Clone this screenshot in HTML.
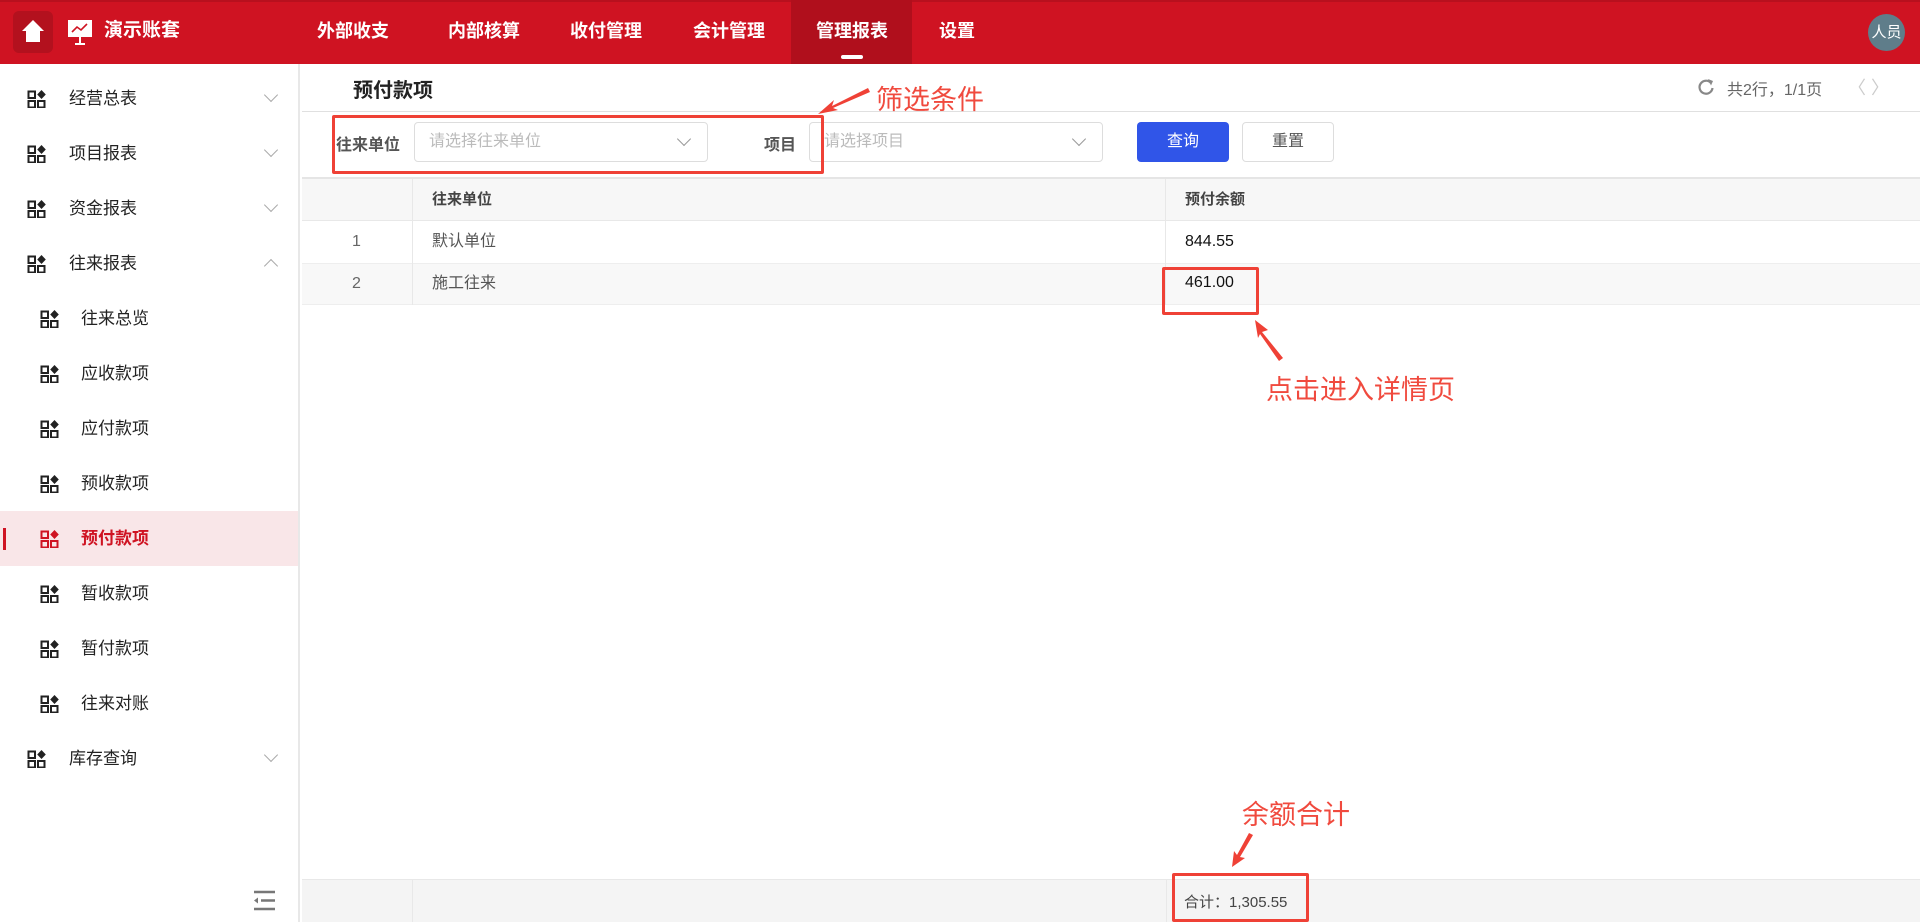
<!DOCTYPE html>
<html><head><meta charset="utf-8"><style>
*{margin:0;padding:0;box-sizing:border-box}
body{width:1920px;height:922px;overflow:hidden;background:#fff;font-family:"Liberation Sans","Noto Sans CJK SC",sans-serif;position:relative;color:#333}
.abs{position:absolute}
.hdr{left:0;top:0;width:1920px;height:64px;background:#cf1322;border-top:2px solid #b8101e}
.nav{top:0;height:64px;line-height:62px;color:#fff;font-weight:bold;font-size:18px;transform:translateX(-50%)}
.side{left:0;top:64px;width:300px;height:858px;border-right:2px solid #e8e8e8}
.mi{left:0;width:298px;height:55px;font-size:17px;color:#222;line-height:55px}
.ic{position:absolute;top:19px;width:19px;height:18px;color:#222}
.chev{position:absolute;left:266px;top:19px;width:10px;height:10px;border-right:1.5px solid #aaa;border-bottom:1.5px solid #aaa;transform:rotate(45deg)}
.chev.up{transform:rotate(225deg);top:25px}
.red{color:#f04a3e;font-size:27px}
.box{border:3px solid #ef4136;border-radius:2px}
.sel{border:1px solid #ddd;border-radius:4px;height:40px;top:122px;font-size:16px;color:#bbb;line-height:38px;padding-left:14px}
.sel:after{content:"";position:absolute;right:18px;top:11px;width:9px;height:9px;border-right:1.3px solid #999;border-bottom:1.3px solid #999;transform:rotate(45deg)}
.cell{font-size:16px;line-height:42px}
</style></head><body>
<div class="abs hdr"></div>
<div class="abs" style="left:13px;top:11px;width:40px;height:42px;background:#b3111e;border-radius:6px"></div>
<svg class="abs" style="left:20px;top:18px" width="26" height="26" viewBox="0 0 26 26"><path d="M13 2 L24 13 L20 13 L20 24 L6 24 L6 13 L2 13Z" fill="#fff"/></svg>
<svg class="abs" style="left:66px;top:18px" width="28" height="28" viewBox="0 0 28 28"><rect x="2" y="2" width="24" height="17" fill="#fff"/><path d="M6 14 L11 9 L15 12 L21 6" stroke="#cf1322" stroke-width="1.6" fill="none"/><path d="M14 19 L14 26 M9 26 L19 26" stroke="#fff" stroke-width="2"/></svg>
<div class="abs" style="left:104px;top:0;line-height:62px;color:#fff;font-weight:bold;font-size:19px">演示账套</div>
<div class="abs" style="left:791px;top:0;width:121px;height:64px;background:#b00f1c"></div>
<div class="abs" style="left:841px;top:55px;width:22px;height:4px;background:#fff;border-radius:2px"></div>
<div class="abs nav" style="left:353px">外部收支</div>
<div class="abs nav" style="left:484px">内部核算</div>
<div class="abs nav" style="left:606px">收付管理</div>
<div class="abs nav" style="left:729px">会计管理</div>
<div class="abs nav" style="left:852px">管理报表</div>
<div class="abs nav" style="left:957px">设置</div>
<div class="abs" style="left:1868px;top:14px;width:37px;height:37px;border-radius:50%;background:#5f7d8a;color:#fff;font-size:15px;line-height:37px;text-align:center">人员</div>

<div class="abs side"></div>
<svg width="0" height="0" style="position:absolute"><defs><g id="gi"><rect x="1.5" y="1.5" width="6.5" height="6.5" fill="none" stroke="currentColor" stroke-width="2"/><rect x="1.5" y="11" width="6.5" height="6.5" fill="none" stroke="currentColor" stroke-width="2"/><rect x="11" y="11" width="6.5" height="6.5" fill="none" stroke="currentColor" stroke-width="2"/><path d="M14.5 0 L18.8 4.5 L14.5 9 L10.2 4.5Z" fill="currentColor"/></g></defs></svg>
<div class="abs mi" style="top:71px"><svg class="ic" style="left:27px"><use href="#gi"/></svg><span class="abs" style="left:69px">经营总表</span><i class="chev"></i></div>
<div class="abs mi" style="top:126px"><svg class="ic" style="left:27px"><use href="#gi"/></svg><span class="abs" style="left:69px">项目报表</span><i class="chev"></i></div>
<div class="abs mi" style="top:181px"><svg class="ic" style="left:27px"><use href="#gi"/></svg><span class="abs" style="left:69px">资金报表</span><i class="chev"></i></div>
<div class="abs mi" style="top:236px"><svg class="ic" style="left:27px"><use href="#gi"/></svg><span class="abs" style="left:69px">往来报表</span><i class="chev up"></i></div>
<div class="abs mi" style="top:291px"><svg class="ic" style="left:40px"><use href="#gi"/></svg><span class="abs" style="left:81px">往来总览</span></div>
<div class="abs mi" style="top:346px"><svg class="ic" style="left:40px"><use href="#gi"/></svg><span class="abs" style="left:81px">应收款项</span></div>
<div class="abs mi" style="top:401px"><svg class="ic" style="left:40px"><use href="#gi"/></svg><span class="abs" style="left:81px">应付款项</span></div>
<div class="abs mi" style="top:456px"><svg class="ic" style="left:40px"><use href="#gi"/></svg><span class="abs" style="left:81px">预收款项</span></div>
<div class="abs mi" style="top:511px;background:#f9e6e8;color:#cf1322;font-weight:bold"><div class="abs" style="left:3px;top:17px;width:3px;height:22px;background:#cf1322"></div><svg class="ic" style="left:40px;color:#cf1322"><use href="#gi"/></svg><span class="abs" style="left:81px">预付款项</span></div>
<div class="abs mi" style="top:566px"><svg class="ic" style="left:40px"><use href="#gi"/></svg><span class="abs" style="left:81px">暂收款项</span></div>
<div class="abs mi" style="top:621px"><svg class="ic" style="left:40px"><use href="#gi"/></svg><span class="abs" style="left:81px">暂付款项</span></div>
<div class="abs mi" style="top:676px"><svg class="ic" style="left:40px"><use href="#gi"/></svg><span class="abs" style="left:81px">往来对账</span></div>
<div class="abs mi" style="top:731px"><svg class="ic" style="left:27px"><use href="#gi"/></svg><span class="abs" style="left:69px">库存查询</span><i class="chev"></i></div>
<svg class="abs" style="left:252px;top:890px" width="24" height="22" viewBox="0 0 24 22"><path d="M2 2H23M9 10.5H23M2 19H23" stroke="#777" stroke-width="2.5"/><path d="M2 10.5L6 7.5V13.5Z" fill="#777"/></svg>

<div class="abs" style="left:353px;top:74px;font-size:20px;font-weight:bold;color:#222">预付款项</div>
<svg class="abs" style="left:1697px;top:77px" width="18" height="20" viewBox="0 0 18 20"><path d="M14 6 A6.5 6.5 0 1 0 15.5 11" stroke="#888" stroke-width="2.2" fill="none"/><path d="M11 2 L16 4 L14 8.5Z" fill="#888"/></svg>
<div class="abs" style="left:1727px;top:76px;font-size:16px;color:#666">共2行，1/1页</div>
<div class="abs" style="left:1848px;top:74px;font-size:18px;color:#ccc">〈 〉</div>
<div class="abs" style="left:302px;top:111px;width:1618px;height:1px;background:#e0e0e0"></div>

<div class="abs" style="left:336px;top:131px;font-size:16px;font-weight:bold;color:#555">往来单位</div>
<div class="abs sel" style="left:414px;width:294px">请选择往来单位</div>
<div class="abs" style="left:764px;top:131px;font-size:16px;font-weight:bold;color:#555">项目</div>
<div class="abs sel" style="left:809px;width:294px">请选择项目</div>
<div class="abs" style="left:1137px;top:122px;width:92px;height:40px;background:#3055e8;border-radius:4px;color:#fff;font-size:16px;line-height:40px;text-align:center">查询</div>
<div class="abs" style="left:1242px;top:122px;width:92px;height:40px;border:1px solid #ddd;border-radius:4px;color:#555;font-size:16px;line-height:38px;text-align:center">重置</div>

<div class="abs" style="left:302px;top:177px;width:1618px;height:2px;background:#e5e5e5"></div>
<div class="abs" style="left:302px;top:179px;width:1618px;height:42px;background:#f7f7f7;border-bottom:1px solid #e8e8e8"></div>
<div class="abs" style="left:302px;top:263px;width:1618px;height:42px;background:#f8f8f8;border-top:1px solid #eee;border-bottom:1px solid #eee"></div>
<div class="abs" style="left:412px;top:179px;width:1px;height:126px;background:#e8e8e8"></div>
<div class="abs" style="left:1165px;top:179px;width:1px;height:126px;background:#e8e8e8"></div>
<div class="abs cell" style="left:432px;top:179px;color:#444;font-weight:bold;font-size:15px">往来单位</div>
<div class="abs cell" style="left:1185px;top:179px;color:#444;font-weight:bold;font-size:15px">预付余额</div>
<div class="abs cell" style="left:352px;top:221px;color:#666">1</div>
<div class="abs cell" style="left:432px;top:221px;color:#555">默认单位</div>
<div class="abs cell" style="left:1185px;top:221px;color:#111">844.55</div>
<div class="abs cell" style="left:352px;top:263px;color:#666">2</div>
<div class="abs cell" style="left:432px;top:263px;color:#555">施工往来</div>
<div class="abs cell" style="left:1185px;top:263px;color:#111;line-height:40px">461.00</div>

<div class="abs" style="left:302px;top:879px;width:1618px;height:43px;background:#f4f4f4;border-top:1px solid #e8e8e8"></div>
<div class="abs" style="left:412px;top:879px;width:1px;height:43px;background:#e8e8e8"></div>
<div class="abs" style="left:1166px;top:879px;width:1px;height:43px;background:#e8e8e8"></div>
<div class="abs" style="left:1184px;top:891px;font-size:15px;color:#444">合计：1,305.55</div>

<div class="abs box" style="left:332px;top:115px;width:492px;height:59px"></div>
<div class="abs box" style="left:1162px;top:267px;width:97px;height:48px"></div>
<div class="abs box" style="left:1172px;top:873px;width:137px;height:49px"></div>
<div class="abs red" style="left:876px;top:78px">筛选条件</div>
<div class="abs red" style="left:1266px;top:368px">点击进入详情页</div>
<div class="abs red" style="left:1242px;top:793px">余额合计</div>
<svg class="abs" style="left:0;top:0;pointer-events:none" width="1920" height="922"><g fill="#ef4136"><path d="M868 88 L832 106 L834 100 L818 114 L838 110 L833 108 L870 92Z"/><path d="M1283 358 L1262 332 L1268 330 L1255 320 L1258 338 L1260 334 L1279 361Z"/><path d="M1253 835 L1240 857 L1245 858 L1232 867 L1234 851 L1237 855 L1249 833Z"/></g></svg>
</body></html>
